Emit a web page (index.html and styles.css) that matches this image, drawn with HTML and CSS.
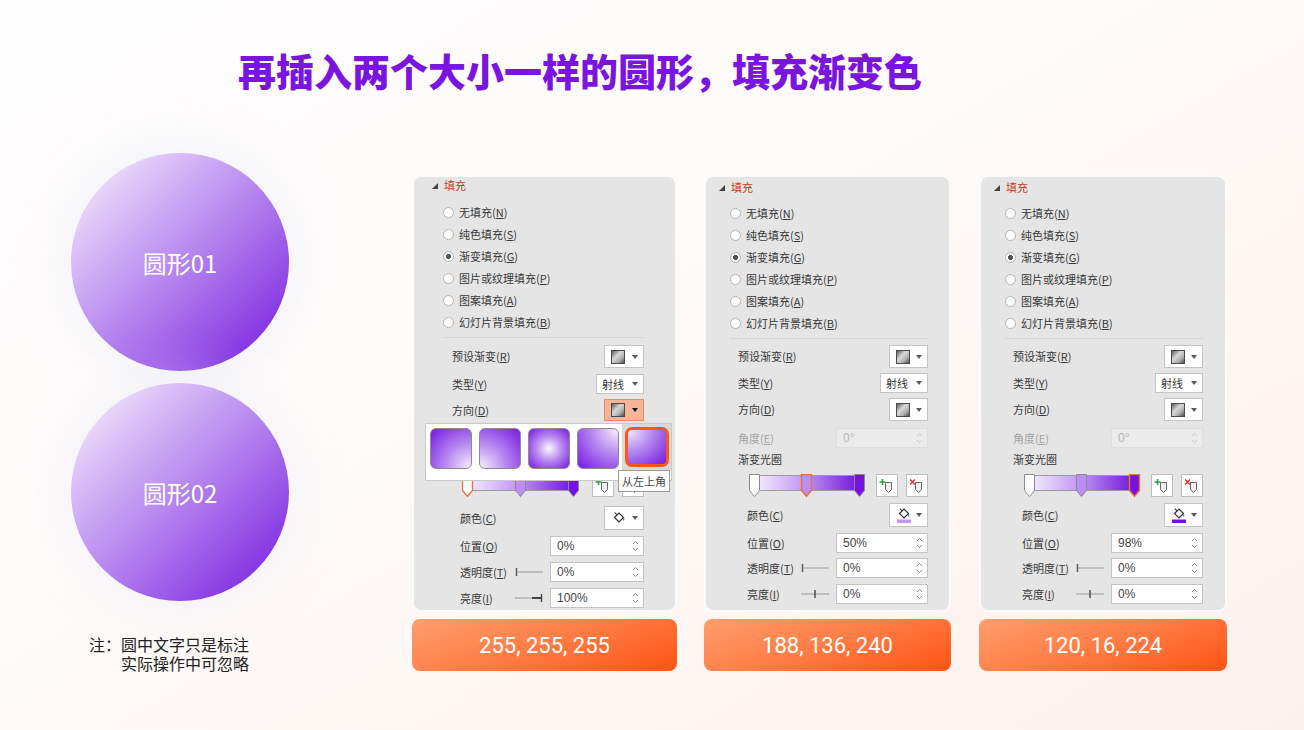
FILE: index.html
```html
<!DOCTYPE html>
<html lang="zh-CN">
<head>
<meta charset="utf-8">
<title>渐变填充</title>
<link rel="stylesheet" href="styles.css">
</head>
<body>
<div class="slide">
  <h1 class="title">再插入两个大小一样的圆形，填充渐变色</h1>
  <div class="main">
    <div class="left">
      <div class="circle">圆形01</div>
      <div class="circle">圆形02</div>
      <div class="note"><span class="l1">注：圆中文字只是标注</span><span class="l2">实际操作中可忽略</span></div>
    </div>

    <!-- Panel 1 -->
    <div class="col col1">
      <div class="panel p1">
        <div class="hdr"><span class="tri"></span><span class="htxt">填充</span></div>
        <div class="radios">
          <div class="radio"><span class="rb"></span>无填充(<u>N</u>)</div>
          <div class="radio"><span class="rb"></span>纯色填充(<u>S</u>)</div>
          <div class="radio"><span class="rb on"></span>渐变填充(<u>G</u>)</div>
          <div class="radio"><span class="rb"></span>图片或纹理填充(<u>P</u>)</div>
          <div class="radio"><span class="rb"></span>图案填充(<u>A</u>)</div>
          <div class="radio"><span class="rb"></span>幻灯片背景填充(<u>B</u>)</div>
        </div>
        <div class="sep"></div>
        <div class="frow r-preset"><span class="lab">预设渐变(<u>R</u>)</span><span class="dd sq"><span class="gicon"></span><span class="caret"></span></span></div>
        <div class="frow r-type"><span class="lab">类型(<u>Y</u>)</span><span class="dd wide">射线<span class="caret"></span></span></div>
        <div class="frow r-dir"><span class="lab">方向(<u>D</u>)</span><span class="dd sq hot"><span class="gicon"></span><span class="caret dark"></span></span></div>
        <div class="frow r-angle dis"><span class="lab">角度(<u>E</u>)</span><span class="inp off">0°<svg class="spin" width="7" height="14" viewBox="0 0 7 14"><path d="M1 5 L3.5 2.5 L6 5" fill="none" stroke="#c8c8c8"/><path d="M1 9 L3.5 11.5 L6 9" fill="none" stroke="#c8c8c8"/></svg></span></div>
        <div class="frow r-glab"><span class="lab">渐变光圈</span></div>
        <div class="frow r-bar">
          <svg class="gbar" width="118" height="24" viewBox="0 0 118 24">
            <defs><linearGradient id="gb1" x1="0" x2="1" y1="0" y2="0"><stop offset="0" stop-color="#f6effe"/><stop offset=".45" stop-color="#c39af3"/><stop offset="1" stop-color="#6c10d8"/></linearGradient></defs>
            <rect x="5" y="1.5" width="108" height="15" fill="url(#gb1)" stroke="#9a9a9a"/>
            <path d="M0.5 0.5 h10 v16 l-5 6 l-5 -6 z" fill="#fff" stroke="#e8743a" stroke-width="1.4"/>
            <path transform="translate(53 0)" d="M0.5 0.5 h10 v16 l-5 6 l-5 -6 z" fill="#bd8df1" stroke="#8a8a8a"/>
            <path transform="translate(106 0)" d="M0.5 0.5 h10 v16 l-5 6 l-5 -6 z" fill="#7612e0" stroke="#8a8a8a"/>
          </svg>
          <span class="sbtn add"><svg width="16" height="16" viewBox="0 0 16 16"><path d="M6.5 4.5 h6 v7 l-3 3 l-3 -3 z" fill="#f0f0f0" stroke="#666"/><path d="M3.5 1 v6 M0.5 4 h6" stroke="#2aa24a" stroke-width="1.6"/></svg></span>
          <span class="sbtn"><svg width="16" height="16" viewBox="0 0 16 16"><path d="M6.5 4.5 h6 v7 l-3 3 l-3 -3 z" fill="#f0f0f0" stroke="#666"/><path d="M1 1.5 l5 5 M6 1.5 l-5 5" stroke="#e0302a" stroke-width="1.4"/></svg></span>
        </div>
        <div class="frow r-color sub"><span class="lab">颜色(<u>C</u>)</span><span class="dd sq tall"><svg width="16" height="16" viewBox="0 0 16 16"><path d="M3.5 7.5 L8 3 L12.5 7.5 L8 12 Z" fill="#fff" stroke="#333" stroke-width="1.2"/><path d="M6 4.8 L3.8 2.6" stroke="#333" stroke-width="1.1"/><path d="M12.5 7.5 q1.8 2.2 0.3 3.6 q-1.2 -1 -0.3 -3.6z" fill="#2a78d6"/></svg><span class="caret"></span></span></div>
        <div class="frow r-pos sub"><span class="lab">位置(<u>O</u>)</span><span class="inp">0%<svg class="spin" width="7" height="14" viewBox="0 0 7 14"><path d="M1 5 L3.5 2.5 L6 5" fill="none" stroke="#888"/><path d="M1 9 L3.5 11.5 L6 9" fill="none" stroke="#888"/></svg></span></div>
        <div class="frow r-tr sub"><span class="lab">透明度(<u>T</u>)</span><svg class="sl" width="28" height="10" viewBox="0 0 28 10"><path d="M1.5 1 v8" stroke="#555" stroke-width="1.4"/><path d="M2 5 h26" stroke="#999"/></svg><span class="inp">0%<svg class="spin" width="7" height="14" viewBox="0 0 7 14"><path d="M1 5 L3.5 2.5 L6 5" fill="none" stroke="#888"/><path d="M1 9 L3.5 11.5 L6 9" fill="none" stroke="#888"/></svg></span></div>
        <div class="frow r-br sub"><span class="lab">亮度(<u>I</u>)</span><svg class="sl" width="28" height="10" viewBox="0 0 28 10"><path d="M0 5 h26" stroke="#999"/><path d="M17 5 h9" stroke="#444" stroke-width="2"/><path d="M26.5 1 v8" stroke="#444" stroke-width="1.4"/></svg><span class="inp">100%<svg class="spin" width="7" height="14" viewBox="0 0 7 14"><path d="M1 5 L3.5 2.5 L6 5" fill="none" stroke="#888"/><path d="M1 9 L3.5 11.5 L6 9" fill="none" stroke="#888"/></svg></span></div>

        <div class="popup">
          <span class="gi g1"></span>
          <span class="gi g2"></span>
          <span class="gi g3"></span>
          <span class="gi g4"></span>
          <span class="gcell"><span class="gi g5 sel"></span></span>
        </div>
        <div class="tip">从左上角</div>
      </div>
      <div class="btn">255, 255, 255</div>
    </div>

    <!-- Panel 2 -->
    <div class="col col2">
      <div class="panel p2">
        <div class="hdr"><span class="tri"></span><span class="htxt">填充</span></div>
        <div class="radios">
          <div class="radio"><span class="rb"></span>无填充(<u>N</u>)</div>
          <div class="radio"><span class="rb"></span>纯色填充(<u>S</u>)</div>
          <div class="radio"><span class="rb on"></span>渐变填充(<u>G</u>)</div>
          <div class="radio"><span class="rb"></span>图片或纹理填充(<u>P</u>)</div>
          <div class="radio"><span class="rb"></span>图案填充(<u>A</u>)</div>
          <div class="radio"><span class="rb"></span>幻灯片背景填充(<u>B</u>)</div>
        </div>
        <div class="sep"></div>
        <div class="frow r-preset"><span class="lab">预设渐变(<u>R</u>)</span><span class="dd sq"><span class="gicon"></span><span class="caret"></span></span></div>
        <div class="frow r-type"><span class="lab">类型(<u>Y</u>)</span><span class="dd wide">射线<span class="caret"></span></span></div>
        <div class="frow r-dir"><span class="lab">方向(<u>D</u>)</span><span class="dd sq"><span class="gicon"></span><span class="caret"></span></span></div>
        <div class="frow r-angle dis"><span class="lab">角度(<u>E</u>)</span><span class="inp off">0°<svg class="spin" width="7" height="14" viewBox="0 0 7 14"><path d="M1 5 L3.5 2.5 L6 5" fill="none" stroke="#c8c8c8"/><path d="M1 9 L3.5 11.5 L6 9" fill="none" stroke="#c8c8c8"/></svg></span></div>
        <div class="frow r-glab"><span class="lab">渐变光圈</span></div>
        <div class="frow r-bar">
          <svg class="gbar" width="118" height="24" viewBox="0 0 118 24">
            <defs><linearGradient id="gb2" x1="0" x2="1" y1="0" y2="0"><stop offset="0" stop-color="#f6effe"/><stop offset=".45" stop-color="#c39af3"/><stop offset="1" stop-color="#6c10d8"/></linearGradient></defs>
            <rect x="5" y="1.5" width="108" height="15" fill="url(#gb2)" stroke="#9a9a9a"/>
            <path d="M0.5 0.5 h10 v16 l-5 6 l-5 -6 z" fill="#fff" stroke="#8a8a8a"/>
            <path transform="translate(52 0)" d="M0.5 0.5 h10 v16 l-5 6 l-5 -6 z" fill="#bd8df1" stroke="#e8743a" stroke-width="1.4"/>
            <path transform="translate(105 0)" d="M0.5 0.5 h10 v16 l-5 6 l-5 -6 z" fill="#7612e0" stroke="#8a8a8a"/>
          </svg>
          <span class="sbtn add"><svg width="16" height="16" viewBox="0 0 16 16"><path d="M6.5 4.5 h6 v7 l-3 3 l-3 -3 z" fill="#f0f0f0" stroke="#666"/><path d="M3.5 1 v6 M0.5 4 h6" stroke="#2aa24a" stroke-width="1.6"/></svg></span>
          <span class="sbtn"><svg width="16" height="16" viewBox="0 0 16 16"><path d="M6.5 4.5 h6 v7 l-3 3 l-3 -3 z" fill="#f0f0f0" stroke="#666"/><path d="M1 1.5 l5 5 M6 1.5 l-5 5" stroke="#e0302a" stroke-width="1.4"/></svg></span>
        </div>
        <div class="frow r-color sub"><span class="lab">颜色(<u>C</u>)</span><span class="dd sq tall"><svg width="16" height="16" viewBox="0 0 16 16"><path d="M3.5 6.5 L8 2 L12.5 6.5 L8 11 Z" fill="#fff" stroke="#333" stroke-width="1.2"/><path d="M6 3.8 L3.8 1.6" stroke="#333" stroke-width="1.1"/><path d="M12.5 6.5 q1.8 2.2 0.3 3.6 q-1.2 -1 -0.3 -3.6z" fill="#2a78d6"/><rect x="1" y="12.5" width="14" height="3.5" fill="#c596f4"/></svg><span class="caret"></span></span></div>
        <div class="frow r-pos sub"><span class="lab">位置(<u>O</u>)</span><span class="inp">50%<svg class="spin" width="7" height="14" viewBox="0 0 7 14"><path d="M1 5 L3.5 2.5 L6 5" fill="none" stroke="#888"/><path d="M1 9 L3.5 11.5 L6 9" fill="none" stroke="#888"/></svg></span></div>
        <div class="frow r-tr sub"><span class="lab">透明度(<u>T</u>)</span><svg class="sl" width="28" height="10" viewBox="0 0 28 10"><path d="M1.5 1 v8" stroke="#555" stroke-width="1.4"/><path d="M2 5 h26" stroke="#999"/></svg><span class="inp">0%<svg class="spin" width="7" height="14" viewBox="0 0 7 14"><path d="M1 5 L3.5 2.5 L6 5" fill="none" stroke="#888"/><path d="M1 9 L3.5 11.5 L6 9" fill="none" stroke="#888"/></svg></span></div>
        <div class="frow r-br sub"><span class="lab">亮度(<u>I</u>)</span><svg class="sl" width="28" height="10" viewBox="0 0 28 10"><path d="M0 5 h28" stroke="#999"/><path d="M14 1 v8" stroke="#444" stroke-width="1.4"/></svg><span class="inp">0%<svg class="spin" width="7" height="14" viewBox="0 0 7 14"><path d="M1 5 L3.5 2.5 L6 5" fill="none" stroke="#888"/><path d="M1 9 L3.5 11.5 L6 9" fill="none" stroke="#888"/></svg></span></div>
      </div>
      <div class="btn">188, 136, 240</div>
    </div>

    <!-- Panel 3 -->
    <div class="col col3">
      <div class="panel p3">
        <div class="hdr"><span class="tri"></span><span class="htxt">填充</span></div>
        <div class="radios">
          <div class="radio"><span class="rb"></span>无填充(<u>N</u>)</div>
          <div class="radio"><span class="rb"></span>纯色填充(<u>S</u>)</div>
          <div class="radio"><span class="rb on"></span>渐变填充(<u>G</u>)</div>
          <div class="radio"><span class="rb"></span>图片或纹理填充(<u>P</u>)</div>
          <div class="radio"><span class="rb"></span>图案填充(<u>A</u>)</div>
          <div class="radio"><span class="rb"></span>幻灯片背景填充(<u>B</u>)</div>
        </div>
        <div class="sep"></div>
        <div class="frow r-preset"><span class="lab">预设渐变(<u>R</u>)</span><span class="dd sq"><span class="gicon"></span><span class="caret"></span></span></div>
        <div class="frow r-type"><span class="lab">类型(<u>Y</u>)</span><span class="dd wide">射线<span class="caret"></span></span></div>
        <div class="frow r-dir"><span class="lab">方向(<u>D</u>)</span><span class="dd sq"><span class="gicon"></span><span class="caret"></span></span></div>
        <div class="frow r-angle dis"><span class="lab">角度(<u>E</u>)</span><span class="inp off">0°<svg class="spin" width="7" height="14" viewBox="0 0 7 14"><path d="M1 5 L3.5 2.5 L6 5" fill="none" stroke="#c8c8c8"/><path d="M1 9 L3.5 11.5 L6 9" fill="none" stroke="#c8c8c8"/></svg></span></div>
        <div class="frow r-glab"><span class="lab">渐变光圈</span></div>
        <div class="frow r-bar">
          <svg class="gbar" width="118" height="24" viewBox="0 0 118 24">
            <defs><linearGradient id="gb3" x1="0" x2="1" y1="0" y2="0"><stop offset="0" stop-color="#f6effe"/><stop offset=".45" stop-color="#c39af3"/><stop offset="1" stop-color="#6c10d8"/></linearGradient></defs>
            <rect x="5" y="1.5" width="108" height="15" fill="url(#gb3)" stroke="#9a9a9a"/>
            <path d="M0.5 0.5 h10 v16 l-5 6 l-5 -6 z" fill="#fff" stroke="#8a8a8a"/>
            <path transform="translate(52 0)" d="M0.5 0.5 h10 v16 l-5 6 l-5 -6 z" fill="#bd8df1" stroke="#8a8a8a"/>
            <path transform="translate(105 0)" d="M0.5 0.5 h10 v16 l-5 6 l-5 -6 z" fill="#7612e0" stroke="#e8743a" stroke-width="1.4"/>
          </svg>
          <span class="sbtn add"><svg width="16" height="16" viewBox="0 0 16 16"><path d="M6.5 4.5 h6 v7 l-3 3 l-3 -3 z" fill="#f0f0f0" stroke="#666"/><path d="M3.5 1 v6 M0.5 4 h6" stroke="#2aa24a" stroke-width="1.6"/></svg></span>
          <span class="sbtn"><svg width="16" height="16" viewBox="0 0 16 16"><path d="M6.5 4.5 h6 v7 l-3 3 l-3 -3 z" fill="#f0f0f0" stroke="#666"/><path d="M1 1.5 l5 5 M6 1.5 l-5 5" stroke="#e0302a" stroke-width="1.4"/></svg></span>
        </div>
        <div class="frow r-color sub"><span class="lab">颜色(<u>C</u>)</span><span class="dd sq tall"><svg width="16" height="16" viewBox="0 0 16 16"><path d="M3.5 6.5 L8 2 L12.5 6.5 L8 11 Z" fill="#fff" stroke="#333" stroke-width="1.2"/><path d="M6 3.8 L3.8 1.6" stroke="#333" stroke-width="1.1"/><path d="M12.5 6.5 q1.8 2.2 0.3 3.6 q-1.2 -1 -0.3 -3.6z" fill="#2a78d6"/><rect x="1" y="12.5" width="14" height="3.5" fill="#7810e0"/></svg><span class="caret"></span></span></div>
        <div class="frow r-pos sub"><span class="lab">位置(<u>O</u>)</span><span class="inp">98%<svg class="spin" width="7" height="14" viewBox="0 0 7 14"><path d="M1 5 L3.5 2.5 L6 5" fill="none" stroke="#888"/><path d="M1 9 L3.5 11.5 L6 9" fill="none" stroke="#888"/></svg></span></div>
        <div class="frow r-tr sub"><span class="lab">透明度(<u>T</u>)</span><svg class="sl" width="28" height="10" viewBox="0 0 28 10"><path d="M1.5 1 v8" stroke="#555" stroke-width="1.4"/><path d="M2 5 h26" stroke="#999"/></svg><span class="inp">0%<svg class="spin" width="7" height="14" viewBox="0 0 7 14"><path d="M1 5 L3.5 2.5 L6 5" fill="none" stroke="#888"/><path d="M1 9 L3.5 11.5 L6 9" fill="none" stroke="#888"/></svg></span></div>
        <div class="frow r-br sub"><span class="lab">亮度(<u>I</u>)</span><svg class="sl" width="28" height="10" viewBox="0 0 28 10"><path d="M0 5 h28" stroke="#999"/><path d="M14 1 v8" stroke="#444" stroke-width="1.4"/></svg><span class="inp">0%<svg class="spin" width="7" height="14" viewBox="0 0 7 14"><path d="M1 5 L3.5 2.5 L6 5" fill="none" stroke="#888"/><path d="M1 9 L3.5 11.5 L6 9" fill="none" stroke="#888"/></svg></span></div>
      </div>
      <div class="btn">120, 16, 224</div>
    </div>
  </div>
</div>
</body>
</html>
```

FILE: styles.css
```css
html, body {
  margin: 0;
  padding: 0;
}
body {
  width: 1304px;
  height: 730px;
  overflow: hidden;
  background: linear-gradient(150deg, #fefdfd 0%, #fefbfa 40%, #fdf1ec 100%);
  font-family: "Noto Sans CJK SC", "Noto Sans", sans-serif;
}
.slide {
  width: 1304px;
  height: 730px;
  box-sizing: border-box;
  padding-top: 47px;
}
.title {
  margin: 0;
  padding-left: 238px;
  font-size: 38px;
  line-height: 46px;
  font-weight: 900;
  color: #7a14e0;
}
.main {
  display: flex;
  align-items: flex-start;
  margin-top: 60px;
}
.left {
  margin-left: 71px;
  width: 218px;
  display: flex;
  flex-direction: column;
}
.circle {
  width: 218px;
  height: 218px;
  border-radius: 50%;
  background: linear-gradient(135deg, #fbf7ff 0%, #d9bdf7 25%, #b07ced 55%, #7416de 100%);
  display: flex;
  align-items: center;
  justify-content: center;
  color: #fff;
  font-size: 24px;
  box-shadow: 0 0 40px 12px rgba(226, 230, 246, 0.35);
}
.circle + .circle {
  margin-top: 12px;
}
.note {
  margin: 35px 0 0 18px;
  font-size: 16px;
  color: #222;
  white-space: nowrap;
  display: flex;
  flex-direction: column;
}
.note .l1,
.note .l2 {
  display: block;
  height: 19px;
  line-height: 17px;
}
.note .l2 {
  padding-left: 32px;
}

/* columns */
.col {
  display: flex;
  flex-direction: column;
  margin-top: 22px;
}
.col1 { margin-left: 123px; width: 265px; }
.col2 { margin-left: 27px; width: 247px; }
.col3 { margin-left: 28px; width: 248px; }

.btn {
  margin-top: 7px;
  height: 52px;
  border-radius: 8px;
  background: linear-gradient(160deg, #ff9e6d 0%, #ff7c45 50%, #ff5312 100%);
  color: #fff;
  font-family: Roboto, "Liberation Sans", sans-serif;
  font-size: 22px;
  display: flex;
  align-items: center;
  justify-content: center;
}

/* panel */
.panel {
  position: relative;
  box-sizing: border-box;
  height: 437px;
  background: #e5e5e5;
  border: 2px solid #fbfbfb;
  border-radius: 9px;
  overflow: hidden;
  color: #383838;
  font-size: 11px;
  line-height: 1;
}
.p1 { padding: 0 31px 0 18px; }
.p2 { padding: 0 21px 0 13px; }
.p3 { padding: 0 22px 0 13px; }

.hdr {
  height: 20px;
  display: flex;
  align-items: center;
}
.p1 .hdr { height: 16px; }
.tri {
  width: 0;
  height: 0;
  border-left: 6px solid transparent;
  border-bottom: 6px solid #444;
  margin-top: 1px;
}
.htxt {
  margin-left: 6px;
  color: #c43d1b;
}
.radios { margin-top: 5px; }
.p1 .radios { margin-top: 8px; }
.radio {
  height: 22px;
  display: flex;
  align-items: center;
}
.rb {
  width: 11px;
  height: 11px;
  box-sizing: border-box;
  border: 1px solid #b4b4b4;
  border-radius: 50%;
  background: #fff;
  margin-left: 11px;
  margin-right: 5px;
}
.rb.on {
  background: radial-gradient(circle, #555 0 2.3px, #fff 2.8px);
}
u { text-decoration-thickness: 1px; text-underline-offset: 1px; }

.sep {
  margin: 4px 0 0 11px;
  height: 1px;
  background: #d6d6d6;
}

.frow {
  display: flex;
  align-items: center;
}
.lab {
  flex: 1;
  margin-left: 19px;
  white-space: nowrap;
}
.p1 .lab { margin-left: 20px; }
.frow.sub .lab { margin-left: 28px; }
.dis .lab { color: #a3a3a3; }

.r-preset { margin-top: 6px; height: 23px; }
.p1 .r-preset { margin-top: 7px; }
.r-type { margin-top: 5px; height: 20px; }
.p1 .r-type { margin-top: 6px; }
.r-dir { margin-top: 5px; height: 23px; }
.p1 .r-dir { height: 22px; }
.r-angle { margin-top: 7px; height: 20px; }
.r-glab { margin-top: 2px; height: 18px; }
.r-bar { margin-top: 6px; height: 23px; }
.r-color { margin-top: 6px; height: 24px; }
.p1 .r-color { margin-top: 9px; }
.r-pos { margin-top: 6px; height: 20px; }
.r-tr { margin-top: 5px; height: 20px; }
.p1 .r-tr { margin-top: 6px; }
.r-br { margin-top: 6px; height: 20px; }

/* dropdowns */
.dd {
  box-sizing: border-box;
  height: 100%;
  background: #fff;
  border: 1px solid #c4c4c4;
  display: flex;
  align-items: center;
  justify-content: space-between;
  padding: 0 5px 0 6px;
}
.dd.sq { width: 39px; }
.p1 .dd.sq { width: 40px; }
.dd.wide { width: 48px; padding-left: 5px; color: #383838; }
.dd.hot {
  background: #f6b597;
  border-color: #eb8a60;
}
.gicon {
  width: 14px;
  height: 14px;
  box-sizing: border-box;
  border: 1px solid #4a4a4a;
  background: linear-gradient(135deg, #5c5c5c 0%, #d8d8d8 40%, #b0b0b0 70%, #4e4e4e 100%);
}
.caret {
  width: 0;
  height: 0;
  border-left: 3.5px solid transparent;
  border-right: 3.5px solid transparent;
  border-top: 4px solid #5a5a5a;
}
.caret.dark { border-top-color: #111; }

/* inputs */
.inp {
  box-sizing: border-box;
  width: 92px;
  height: 20px;
  background: #fff;
  border: 1px solid #c4c4c4;
  display: flex;
  align-items: center;
  padding: 0 4px 0 6px;
  font-family: "Liberation Sans", Arial, sans-serif;
  font-size: 12px;
  color: #444;
}
.p1 .inp { width: 94px; }
.inp.off {
  background: #ebebeb;
  border-color: #dedede;
  color: #b4b4b4;
}
.spin { margin-left: auto; }
.sl { margin-right: 7px; }

/* gradient stops */
.gbar { margin-left: 30px; }
.sbtn {
  box-sizing: border-box;
  width: 22px;
  height: 23px;
  background: #fff;
  border: 1px solid #bdbdbd;
  display: flex;
  align-items: center;
  justify-content: center;
  margin-left: 8px;
}
.sbtn.add { margin-left: auto; }

/* direction popup (overlay) */
.popup {
  position: absolute;
  left: 11px;
  top: 246px;
  width: 247px;
  height: 58px;
  box-sizing: border-box;
  background: #fff;
  border: 1px solid #c9c9c9;
  display: flex;
  align-items: flex-start;
  gap: 7px;
  padding: 4px 0 0 4px;
  z-index: 2;
}
.gi {
  width: 42px;
  height: 41px;
  box-sizing: border-box;
  border: 1px solid #8c8c8c;
  border-radius: 6px;
  flex: none;
}
.g1 { background: radial-gradient(farthest-corner at 100% 100%, #f7f1fe 0%, #b88af0 45%, #7718df 100%); }
.g2 { background: radial-gradient(farthest-corner at 0% 100%, #f7f1fe 0%, #b88af0 45%, #7718df 100%); }
.g3 { background: radial-gradient(farthest-corner at 50% 50%, #fbf8ff 0%, #b88af0 45%, #7718df 100%); }
.g4 { background: radial-gradient(farthest-corner at 100% 0%, #f7f1fe 0%, #b88af0 45%, #7718df 100%); }
.g5 { background: radial-gradient(farthest-corner at 0% 0%, #f4ecfe 0%, #b58af0 45%, #7718df 100%); }
.gcell {
  margin: -4px 0 0 -4px;
  width: 49px;
  height: 47px;
  background: #d9d9d9;
  display: flex;
  justify-content: center;
  padding-top: 3px;
  box-sizing: border-box;
}
.gi.sel {
  width: 44px;
  height: 40px;
  border: 3px solid #ff5612;
  border-radius: 7px;
}
.tip {
  position: absolute;
  left: 204px;
  top: 293px;
  width: 52px;
  height: 22px;
  box-sizing: border-box;
  background: #fff;
  border: 1px solid #9c9c9c;
  display: flex;
  align-items: center;
  justify-content: center;
  color: #444;
  font-size: 11px;
  z-index: 3;
}
```
